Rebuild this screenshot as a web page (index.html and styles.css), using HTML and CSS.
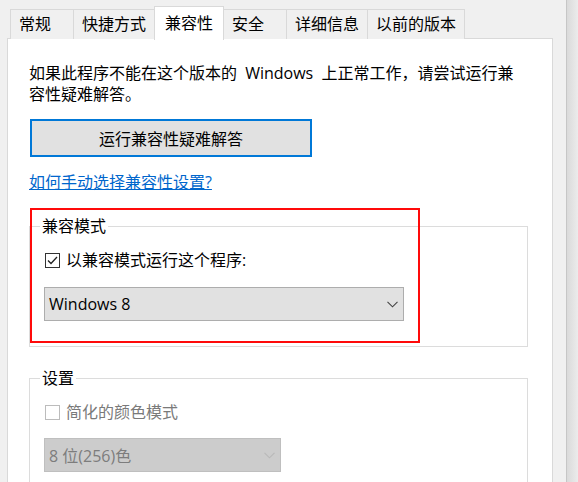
FILE: index.html
```html
<!DOCTYPE html>
<html lang="zh-CN">
<head>
<meta charset="utf-8">
<title>兼容性</title>
<link rel="stylesheet" href="styles.css">
</head>
<body>
<div class="window">
  <div class="sheet">
    <div class="tabs">
      <div class="tab">常规</div>
      <div class="tab">快捷方式</div>
      <div class="tab active">兼容性</div>
      <div class="tab">安全</div>
      <div class="tab">详细信息</div>
      <div class="tab">以前的版本</div>
    </div>
    <div class="panel">
      <p class="intro">如果此程序不能在这个版本的 Windows 上正常工作，请尝试运行兼容性疑难解答。</p>
      <button class="btn" type="button">运行兼容性疑难解答</button>
      <div class="link-row"><a class="link" href="#">如何手动选择兼容性设置?</a></div>

      <fieldset class="group">
        <legend>兼容模式</legend>
        <label class="check">
          <span class="box"><svg width="13" height="13" viewBox="0 0 13 13"><path d="M2 6.5 L5 9.5 L11 3" fill="none" stroke="#222" stroke-width="1.3"/></svg></span>
          <span>以兼容模式运行这个程序:</span>
        </label>
        <div class="select">
          <span>Windows 8</span>
          <svg width="11" height="7" viewBox="0 0 11 7"><path d="M0.5 0.8 L5.5 5.8 L10.5 0.8" fill="none" stroke="#444" stroke-width="1.1"/></svg>
        </div>
      </fieldset>

      <fieldset class="group group-settings">
        <legend>设置</legend>
        <label class="check disabled">
          <span class="box"></span>
          <span>简化的颜色模式</span>
        </label>
        <div class="select select-small disabled">
          <span>8 位(256)色</span>
          <svg width="11" height="7" viewBox="0 0 11 7"><path d="M0.5 0.8 L5.5 5.8 L10.5 0.8" fill="none" stroke="#b8b8b8" stroke-width="1.1"/></svg>
        </div>
      </fieldset>

      <div class="highlight"></div>
    </div>
  </div>
  <div class="edge"></div>
</div>
</body>
</html>
```
FILE: styles.css
```css
html, body {
  margin: 0;
  height: 482px;
  overflow: hidden;
  background: #f0f0f0;
  font-family: "Open Sans", "Noto Sans CJK SC", sans-serif;
  font-size: 16px;
  color: #000;
}

.window {
  display: flex;
  height: 482px;
  overflow: hidden;
}

.sheet {
  flex: none;
  width: 566px;
  box-sizing: border-box;
  padding: 5px 13px 0 7px;
}

.edge {
  flex: none;
  width: 12px;
  border-left: 1px solid #c6c6c6;
  background: linear-gradient(to right, #dadada, #ededed);
}

.tabs {
  display: flex;
  align-items: flex-end;
  height: 34px;
  padding-left: 3px;
  position: relative;
  z-index: 2;
}

.tab {
  box-sizing: border-box;
  min-width: 64px;
  height: 30px;
  padding: 0 8px;
  line-height: 28px;
  border: 1px solid #d9d9d9;
  border-bottom: none;
  background: #f0f0f0;
  margin-left: -1px;
  white-space: nowrap;
}

.tab:first-child {
  margin-left: 0;
}

.tab.active {
  height: 34px;
  line-height: 32px;
  padding: 0 10px;
  background: #fff;
  position: relative;
  z-index: 1;
  margin-bottom: -1px;
}

.panel {
  position: relative;
  margin-top: -1px;
  height: 444px;
  overflow: hidden;
  box-sizing: border-box;
  border: 1px solid #d9d9d9;
  border-bottom: none;
  background: #fff;
  padding: 24px 24px 0 21px;
}

.intro {
  margin: 0;
  line-height: 21px;
  word-spacing: 4px;
}

.btn {
  display: block;
  margin: 14px 0 0 1px;
  width: 282px;
  height: 38px;
  box-sizing: border-box;
  border: 2px solid #0078d7;
  background: #e1e1e1;
  font: inherit;
  color: #000;
  padding: 0;
}

.link-row {
  margin-top: 15px;
  line-height: 21px;
}

.link {
  color: #0066cc;
  text-decoration: underline;
}

.group {
  margin: 23px 0 0;
  padding: 0 14px 25px;
  border: 1px solid #dcdcdc;
  min-width: 0;
}

.group legend {
  padding: 0 2px;
  margin-left: -4px;
  line-height: 21px;
}

.group-settings {
  margin-top: 21px;
  padding-bottom: 20px;
}

.check {
  display: flex;
  align-items: center;
  gap: 6px;
  margin-top: 13px;
  line-height: 21px;
}

.box {
  box-sizing: border-box;
  width: 15px;
  height: 15px;
  margin-left: 1px;
  border: 1px solid #333;
  background: #fff;
  display: flex;
  align-items: center;
  justify-content: center;
}

.check.disabled {
  color: #7a7a7a;
}

.check.disabled .box {
  border-color: #bcbcbc;
}

.select {
  box-sizing: border-box;
  display: flex;
  align-items: center;
  justify-content: space-between;
  width: 360px;
  height: 34px;
  margin-top: 16px;
  padding: 0 5px 0 4px;
  border: 1px solid #adadad;
  background: #e1e1e1;
}

.select-small {
  width: 237px;
  margin-top: 15px;
}

.select.disabled {
  background: #cccccc;
  border-color: #bfbfbf;
  color: #7d7d7d;
}

.highlight {
  position: absolute;
  left: 22px;
  top: 169px;
  width: 390px;
  height: 135px;
  box-sizing: border-box;
  border: 2px solid #ff0a0a;
  pointer-events: none;
}
```
